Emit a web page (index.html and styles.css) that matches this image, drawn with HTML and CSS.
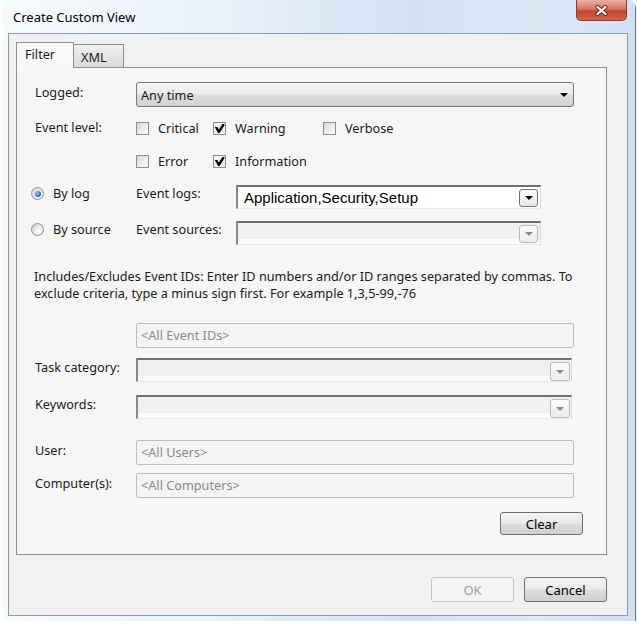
FILE: index.html
```html
<!DOCTYPE html>
<html lang="en">
<head>
  <meta charset="UTF-8" />
  <title>Create Custom View</title>
  <link rel="stylesheet" href="styles.css">
</head>
<body>

  <div class="window">
    <!-- Title bar -->
    <div class="titlebar">
      <span class="title">Create Custom View</span>
      <div class="close-btn">
        <svg width="15" height="11" viewBox="0 0 15 11">
          <path d="M3.5 2 L11.5 9 M11.5 2 L3.5 9" stroke="#6b2418" stroke-width="4" stroke-linecap="round" fill="none"/>
          <path d="M3.5 2 L11.5 9 M11.5 2 L3.5 9" stroke="#ffffff" stroke-width="2.3" stroke-linecap="round" fill="none"/>
        </svg>
      </div>
    </div>

    <div class="client">
      <div class="tabs">
        <div class="tab active">Filter</div>
        <div class="tab">XML</div>
      </div>

      <div class="panel">
        <div class="row" id="rowLogged">
          <div class="lbl">Logged:</div>
          <div class="dropdown">
            <span>Any time</span>
            <span class="arrow"></span>
          </div>
        </div>

        <div class="row" id="rowLevel1">
          <div class="lbl">Event level:</div>
          <div class="checks">
            <div class="check"><span class="box"></span>Critical</div>
            <div class="check"><span class="box checked"><svg width="11" height="11" viewBox="0 0 11 11"><path d="M0.8 4 L3.4 4 L4.8 6.4 L8.4 1 L10.4 1 L10.4 2.6 L5.6 10 L4 10 Z" fill="#000"/></svg></span>Warning</div>
            <div class="check"><span class="box"></span>Verbose</div>
          </div>
        </div>

        <div class="row" id="rowLevel2">
          <div class="lbl"></div>
          <div class="checks">
            <div class="check"><span class="box"></span>Error</div>
            <div class="check"><span class="box checked"><svg width="11" height="11" viewBox="0 0 11 11"><path d="M0.8 4 L3.4 4 L4.8 6.4 L8.4 1 L10.4 1 L10.4 2.6 L5.6 10 L4 10 Z" fill="#000"/></svg></span>Information</div>
          </div>
        </div>

        <div class="row" id="rowByLog">
          <div class="radio-opt"><span class="radio on"></span>By log</div>
          <div class="lbl-sm">Event logs:</div>
          <div class="combo">
            <span class="combo-text">Application,Security,Setup</span>
            <span class="combo-btn"><span class="arrow"></span></span>
          </div>
        </div>

        <div class="row" id="rowBySource">
          <div class="radio-opt"><span class="radio"></span>By source</div>
          <div class="lbl-sm">Event sources:</div>
          <div class="combo disabled">
            <span class="combo-text"></span>
            <span class="combo-btn"><span class="arrow"></span></span>
          </div>
        </div>

        <p class="desc">Includes/Excludes Event IDs: Enter ID numbers and/or ID ranges separated by commas. To exclude criteria, type a minus sign first. For example 1,3,5-99,-76</p>

        <div class="row" id="rowIds">
          <div class="lbl"></div>
          <div class="textbox">&lt;All Event IDs&gt;</div>
        </div>

        <div class="row" id="rowTask">
          <div class="lbl">Task category:</div>
          <div class="combo disabled wide">
            <span class="combo-text"></span>
            <span class="combo-btn"><span class="arrow"></span></span>
          </div>
        </div>

        <div class="row" id="rowKeywords">
          <div class="lbl">Keywords:</div>
          <div class="combo disabled wide">
            <span class="combo-text"></span>
            <span class="combo-btn"><span class="arrow"></span></span>
          </div>
        </div>

        <div class="row" id="rowUser">
          <div class="lbl">User:</div>
          <div class="textbox">&lt;All Users&gt;</div>
        </div>

        <div class="row" id="rowComputer">
          <div class="lbl">Computer(s):</div>
          <div class="textbox">&lt;All Computers&gt;</div>
        </div>

        <div class="row" id="rowClear">
          <button class="btn">Clear</button>
        </div>
      </div>

      <div class="footer">
        <button class="btn" disabled>OK</button>
        <button class="btn">Cancel</button>
      </div>
    </div>
  </div>

</body>
</html>
```

FILE: styles.css
```css
body {
  margin: 0;
  background: #fff;
  font-family: "Noto Sans", "Open Sans", sans-serif;
  font-size: 12.7px;
  color: #1a1a1a;
}

.window {
  width: 620px;
  margin-left: 3px;
  padding: 0 7px 5px 5px;
  background: linear-gradient(to right, #f7fafd 0%, #e8f0f9 35%, #d2e2f4 65%, #dde9f7 85%, #cfe0f3 100%);
  border-radius: 6px 6px 0 0;
  box-shadow: 1px 2px 1px rgba(0, 0, 0, 0.6);
}

.titlebar {
  height: 33px;
  display: flex;
  justify-content: space-between;
  align-items: flex-start;
}

.title {
  margin: 8px 0 0 5px;
  font-size: 13px;
  line-height: 18px;
  color: #000;
}

.close-btn {
  width: 51px;
  height: 21px;
  margin-right: 1px;
  box-sizing: border-box;
  border: 1px solid #8e3b2c;
  border-top: none;
  border-radius: 0 0 5px 5px;
  background: linear-gradient(to bottom, #e9b3a4 0%, #d77560 45%, #c4432b 55%, #d0664c 100%);
  display: flex;
  justify-content: center;
  align-items: center;
}

.client {
  border: 1px solid #8d9aab;
  background: #f1f1f1;
  padding: 8px 20px 13px 7px;
}

/* Tabs */
.tabs {
  display: flex;
  align-items: flex-end;
  height: 25px;
}

.tab {
  box-sizing: border-box;
  border: 1px solid #8c8f96;
  border-bottom: none;
  line-height: 20px;
}

.tab.active {
  width: 58px;
  height: 26px;
  margin-bottom: -1px;
  padding: 1px 0 0 8px;
  background: #f8f8f8;
  position: relative;
  z-index: 1;
}

.tab:not(.active) {
  width: 51px;
  height: 23px;
  margin-left: -1px;
  padding: 2px 0 0 7px;
  background: linear-gradient(to bottom, #f0f0f0, #d9d9d9);
}

.panel {
  border: 1px solid #8f8f8f;
  background: #f6f6f6;
  padding: 14px 23px 19px 18px;
}

.row {
  display: flex;
  align-items: flex-start;
}

.lbl {
  width: 101px;
  flex-shrink: 0;
  line-height: 18px;
  padding-top: 1px;
}

#rowLevel1 { margin-top: 11px; }
#rowLevel2 { margin-top: 13px; }
#rowByLog { margin-top: 14px; margin-left: -4px; }
#rowBySource { margin-top: 12px; margin-left: -4px; }
#rowIds { margin-top: 21px; }
#rowTask { margin-top: 10px; }
#rowKeywords { margin-top: 13px; }
#rowUser { margin-top: 21px; }
#rowComputer { margin-top: 8px; }
#rowClear { margin-top: 14px; justify-content: flex-end; }

#rowLevel1 .lbl, #rowLevel2 .lbl {
  line-height: 20px;
  padding-top: 0;
  margin-top: -1px;
}

#rowTask .lbl, #rowKeywords .lbl {
  padding-top: 0;
}

/* Dropdowns */
.dropdown {
  width: 438px;
  height: 25px;
  box-sizing: border-box;
  border: 1px solid #767676;
  border-radius: 3px;
  background: linear-gradient(to bottom, #f3f3f3 0%, #ebebeb 48%, #dddddd 52%, #d3d3d3 100%);
  display: flex;
  justify-content: space-between;
  align-items: center;
  padding: 0 5px 0 4px;
}

.arrow {
  width: 0;
  height: 0;
  border-left: 4px solid transparent;
  border-right: 4px solid transparent;
  border-top: 4px solid #000;
}

/* Checkboxes */
.checks {
  display: grid;
  grid-template-columns: 77px 110px auto;
}

.check {
  display: flex;
  align-items: center;
  gap: 9px;
  line-height: 20px;
}

.box {
  width: 13px;
  height: 13px;
  box-sizing: border-box;
  border: 1px solid #8f8f8f;
  background: linear-gradient(135deg, #d6d6d6 0%, #eeeeee 60%, #fafafa 100%);
  display: flex;
  justify-content: center;
  align-items: center;
}

.box.checked {
  background: #f2f2f2;
}

/* Radios */
.radio-opt {
  width: 105px;
  flex-shrink: 0;
  display: flex;
  align-items: center;
  gap: 9px;
  line-height: 17px;
}

.radio {
  width: 13px;
  height: 13px;
  box-sizing: border-box;
  border: 1px solid #8e8f8f;
  border-radius: 50%;
  background: radial-gradient(circle at 65% 65%, #ffffff 0%, #e6e6e6 50%, #cfcfcf 100%);
  display: flex;
  justify-content: center;
  align-items: center;
}

.radio.on::after {
  content: "";
  width: 6px;
  height: 6px;
  border-radius: 50%;
  background: radial-gradient(circle at 35% 35%, #9ccaf0 0%, #2a73c6 60%, #1c4f94 100%);
}

.lbl-sm {
  width: 100px;
  flex-shrink: 0;
  line-height: 17px;
}

/* Combo boxes */
.combo {
  width: 305px;
  height: 24px;
  box-sizing: border-box;
  background: #fff;
  border-top: 2px solid #6f6f6f;
  border-left: 2px solid #8a8a8a;
  border-right: 1px solid #dcdcdc;
  border-bottom: 1px solid #e8e8e8;
  display: flex;
  justify-content: space-between;
  align-items: center;
  padding: 0 2px 0 6px;
}

.combo-text {
  font-family: "Liberation Sans", Arial, sans-serif;
  font-size: 15px;
  color: #000;
}

.combo-btn {
  width: 19px;
  height: 18px;
  box-sizing: border-box;
  border: 1px solid #737373;
  border-radius: 3px;
  background: linear-gradient(to bottom, #fdfdfd, #e6e6e6);
  display: flex;
  justify-content: center;
  align-items: center;
}

.combo.disabled {
  background: linear-gradient(to bottom, #f0f0f0 0%, #f0f0f0 75%, #fbfbfb 76%, #fbfbfb 100%);
}

.combo.disabled .combo-btn {
  border-color: #b9b9b9;
  background: linear-gradient(to bottom, #fafafa, #ececec);
}

.combo.disabled .arrow {
  border-top-color: #8d8d8d;
}

.combo.wide {
  width: 436px;
  padding-right: 1px;
}

.combo.wide .combo-btn {
  width: 20px;
  height: 19px;
  margin-top: 2px;
}

/* Description */
.desc {
  margin: 23px 0 0 -1px;
  line-height: 17px;
}

/* Text boxes */
.textbox {
  width: 438px;
  height: 25px;
  box-sizing: border-box;
  border: 1px solid #bdbdbd;
  border-radius: 2px;
  background: #f4f4f4;
  color: #8a8a8a;
  line-height: 23px;
  padding-left: 4px;
}

/* Buttons */
.btn {
  font-family: inherit;
  font-size: 13px;
  color: #000;
  width: 83px;
  height: 24px;
  border: 1px solid #707070;
  border-radius: 3px;
  background: linear-gradient(to bottom, #f3f3f3 0%, #ebebeb 48%, #dddddd 52%, #cfcfcf 100%);
  padding: 0;
}

#rowClear .btn {
  height: 23px;
}

.btn:disabled {
  border-color: #c2c5c8;
  background: #f4f4f4;
  color: #a0a0a0;
}

.footer {
  display: flex;
  justify-content: flex-end;
  gap: 10px;
  margin-top: 22px;
}

.footer .btn {
  width: 83px;
  height: 25px;
}
```
